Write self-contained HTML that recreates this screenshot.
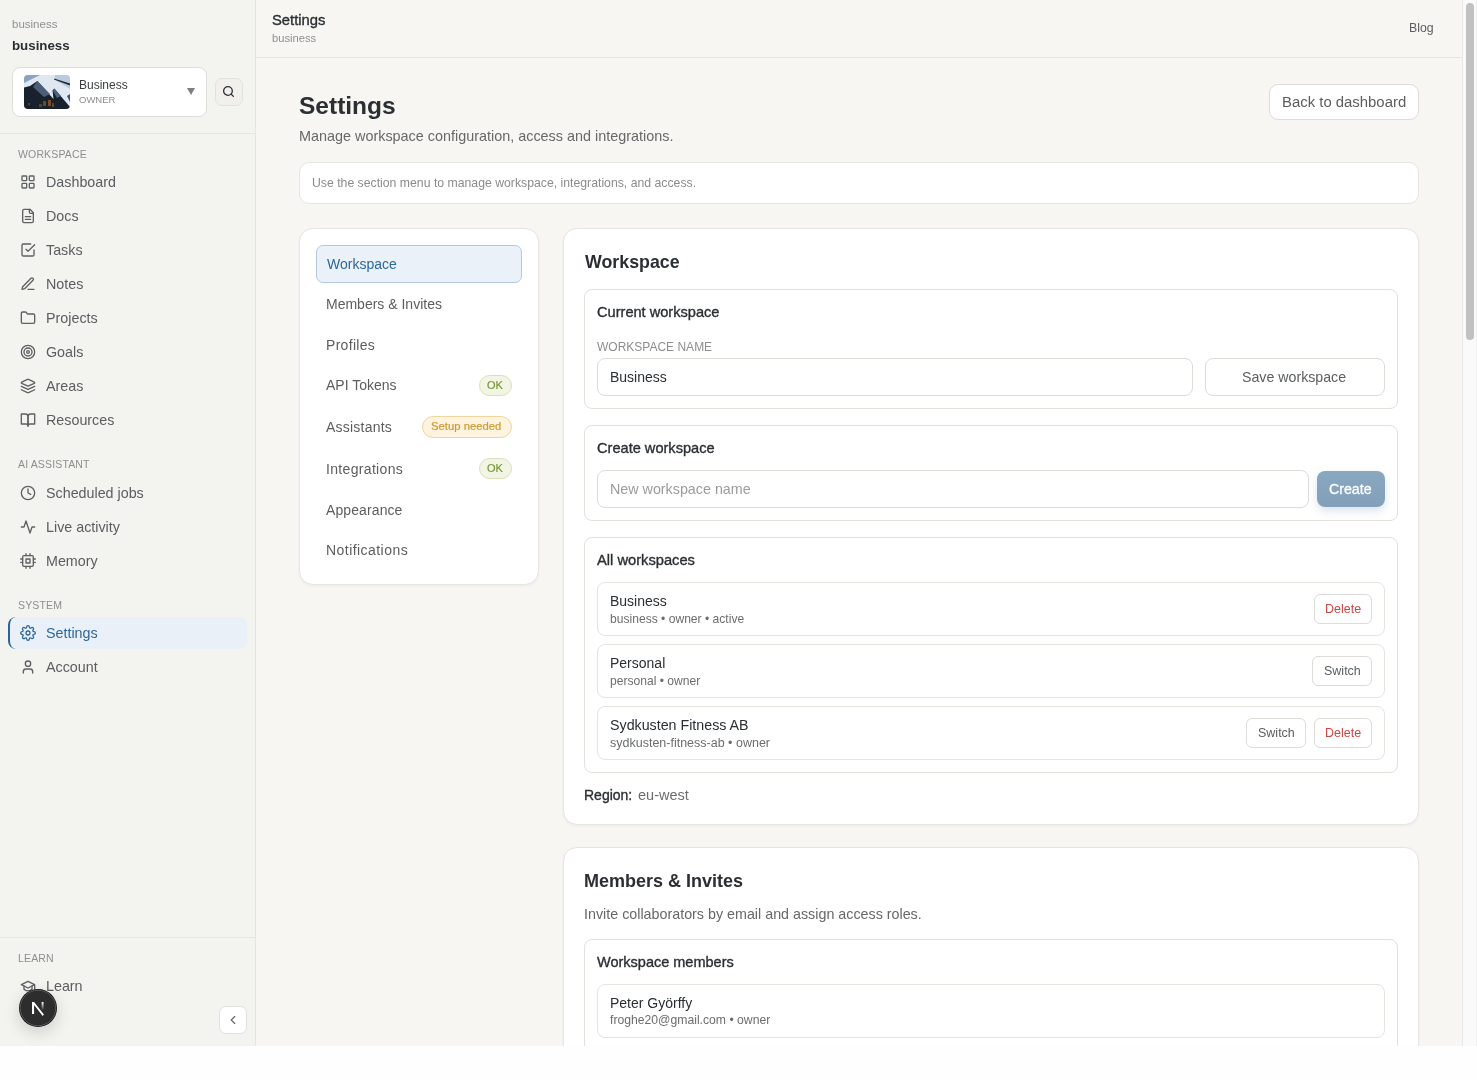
<!DOCTYPE html>
<html><head><meta charset="utf-8">
<style>
*{box-sizing:border-box;margin:0;padding:0}
html,body{width:1477px;height:1080px;overflow:hidden;background:#fefefe;font-family:"Liberation Sans",sans-serif}
#app{position:absolute;left:0;top:0;width:1477px;height:1046px;overflow:hidden;will-change:transform}
.t{position:absolute;white-space:nowrap;line-height:1}
.abs{position:absolute}
#side{position:absolute;left:0;top:0;width:256px;height:1046px;background:#f3f4ef;border-right:1px solid #e6e5e0}
#main{position:absolute;left:256px;top:0;width:1206px;height:1046px;background:#f7f6f2}
#sb{position:absolute;left:1462px;top:0;width:15px;height:1046px;background:#fafafa;border-left:1px solid #e8e8e8;border-right:1px solid #efefef}
#thumb{position:absolute;left:3px;top:3px;width:8px;height:337px;border-radius:4px;background:#c1c1c1}
.ico{position:absolute;width:16px;height:16px;fill:none;stroke:#5e6062;stroke-width:2;stroke-linecap:round;stroke-linejoin:round}
.nav{color:#5b5d5f;font-size:14.3px}
.lbl{color:#8d8e8f;font-size:10.5px;letter-spacing:0.15px}
.sb6{font-weight:normal;-webkit-text-stroke:0.35px currentColor}
.card{position:absolute;background:#fff;border:1px solid #e7e5e0;border-radius:14px}
.sub{position:absolute;background:#fff;border:1px solid #e3e1db;border-radius:8px}
.btn{position:absolute;background:#fff;border:1px solid #dedcd6;border-radius:6px}
</style></head>
<body>
<div id="app">
<!-- SIDEBAR -->
<div id="side">
  <div class="t" style="left:12px;top:19px;font-size:11.5px;color:#8f9091">business</div>
  <div class="t" style="left:12px;top:39px;font-size:13.3px;font-weight:bold;color:#2b2f33">business</div>
  <div class="abs" style="left:12px;top:67px;width:195px;height:50px;background:#fff;border:1px solid #dfddd7;border-radius:8px"></div>
  <svg class="abs" style="left:24px;top:75px" width="46" height="34" viewBox="0 0 46 34">
    <defs><clipPath id="cp"><rect width="46" height="34" rx="4"/></clipPath></defs>
    <g clip-path="url(#cp)">
      <rect width="46" height="34" fill="#dfe8f1"/>
      <polygon points="0,0 16,0 0,8" fill="#88a4c1"/>
      <polygon points="31,0 46,0 46,14 31,5" fill="#b9cbdd"/>
      <polygon points="30,3.5 46,8.5 46,10.5 30,4.6" fill="#1b2431"/>
      <polygon points="0,12.5 6,11 13.4,6 29.5,24 28.5,15.5 30.3,13.4 46,32 46,34 0,34" fill="#18212c"/>
      <polygon points="13.4,6 26,19 20,22 9,12" fill="#4d5f78"/>
      <polygon points="30.3,13.4 37,21 33,23 29,16" fill="#4a6482"/>
      <polygon points="43,21 46,19 46,27" fill="#3a5574"/>
      <rect x="19" y="26" width="3" height="5" fill="#6e4826"/><rect x="24" y="25" width="3" height="6" fill="#7a5028"/><rect x="15" y="29" width="3" height="3" fill="#5e3e22"/><rect x="28" y="28" width="2" height="4" fill="#6a4624"/>
      <rect x="4" y="28" width="2" height="2" fill="#5b4030"/>
    </g>
  </svg>
  <div class="t" style="left:79px;top:79px;font-size:12px;color:#3a3d40">Business</div>
  <div class="t" style="left:79px;top:95px;font-size:9.5px;color:#8d8e8f">OWNER</div>
  <svg class="abs" style="left:187px;top:88px" width="8" height="7" viewBox="0 0 8 7"><polygon points="0,0 8,0 4,7" fill="#7d7e7f"/></svg>
  <div class="abs" style="left:215px;top:78px;width:28px;height:28px;background:#f1f0ec;border:1px solid #e3e1dc;border-radius:7px"></div>
  <svg class="abs" style="left:222px;top:85px;width:13px;height:13px;fill:none;stroke:#2b2f33;stroke-width:2.4;stroke-linecap:round" viewBox="0 0 24 24"><circle cx="11" cy="11" r="8"/><path d="m21 21-4.3-4.3"/></svg>
  <div class="abs" style="left:0;top:133px;width:255px;height:1px;background:#e6e5e0"></div>

  <div class="t lbl" style="left:18px;top:149px">WORKSPACE</div>
  <svg class="ico" style="left:20px;top:174px" viewBox="0 0 24 24"><rect width="7" height="7" x="3" y="3" rx="1"/><rect width="7" height="7" x="14" y="3" rx="1"/><rect width="7" height="7" x="14" y="14" rx="1"/><rect width="7" height="7" x="3" y="14" rx="1"/></svg>
  <div class="t nav" style="left:46px;top:175px">Dashboard</div>
  <svg class="ico" style="left:20px;top:208px" viewBox="0 0 24 24"><path d="M15 2H6a2 2 0 0 0-2 2v16a2 2 0 0 0 2 2h12a2 2 0 0 0 2-2V7Z"/><path d="M14 2v4a2 2 0 0 0 2 2h4"/><path d="M16 13H8"/><path d="M16 17H8"/></svg>
  <div class="t nav" style="left:46px;top:209px">Docs</div>
  <svg class="ico" style="left:20px;top:242px" viewBox="0 0 24 24"><path d="m9 11 3 3L22 4"/><path d="M21 12v7a2 2 0 0 1-2 2H5a2 2 0 0 1-2-2V5a2 2 0 0 1 2-2h11"/></svg>
  <div class="t nav" style="left:46px;top:243px">Tasks</div>
  <svg class="ico" style="left:20px;top:276px" viewBox="0 0 24 24"><path d="M12 20h9"/><path d="M16.5 3.5a2.12 2.12 0 0 1 3 3L7 19l-4 1 1-4Z"/></svg>
  <div class="t nav" style="left:46px;top:277px">Notes</div>
  <svg class="ico" style="left:20px;top:310px" viewBox="0 0 24 24"><path d="M20 20a2 2 0 0 0 2-2V8a2 2 0 0 0-2-2h-7.9a2 2 0 0 1-1.69-.9L9.6 3.9A2 2 0 0 0 7.93 3H4a2 2 0 0 0-2 2v13a2 2 0 0 0 2 2Z"/></svg>
  <div class="t nav" style="left:46px;top:311px">Projects</div>
  <svg class="ico" style="left:20px;top:344px" viewBox="0 0 24 24"><circle cx="12" cy="12" r="10"/><circle cx="12" cy="12" r="6"/><circle cx="12" cy="12" r="2"/></svg>
  <div class="t nav" style="left:46px;top:345px">Goals</div>
  <svg class="ico" style="left:20px;top:378px" viewBox="0 0 24 24"><path d="m12.83 2.18a2 2 0 0 0-1.66 0L2.6 6.08a1 1 0 0 0 0 1.83l8.58 3.91a2 2 0 0 0 1.66 0l8.58-3.9a1 1 0 0 0 0-1.83Z"/><path d="m22 17.65-9.17 4.16a2 2 0 0 1-1.66 0L2 17.65"/><path d="m22 12.65-9.17 4.16a2 2 0 0 1-1.66 0L2 12.65"/></svg>
  <div class="t nav" style="left:46px;top:379px">Areas</div>
  <svg class="ico" style="left:20px;top:412px" viewBox="0 0 24 24"><path d="M2 3h6a4 4 0 0 1 4 4v14a3 3 0 0 0-3-3H2z"/><path d="M22 3h-6a4 4 0 0 0-4 4v14a3 3 0 0 1 3-3h7z"/></svg>
  <div class="t nav" style="left:46px;top:413px">Resources</div>

  <div class="t lbl" style="left:18px;top:459px">AI ASSISTANT</div>
  <svg class="ico" style="left:20px;top:485px" viewBox="0 0 24 24"><circle cx="12" cy="12" r="10"/><path d="M12 6v6l4 2"/></svg>
  <div class="t nav" style="left:46px;top:486px">Scheduled jobs</div>
  <svg class="ico" style="left:20px;top:519px" viewBox="0 0 24 24"><path d="M22 12h-4l-3 9L9 3l-3 9H2"/></svg>
  <div class="t nav" style="left:46px;top:520px">Live activity</div>
  <svg class="ico" style="left:20px;top:553px" viewBox="0 0 24 24"><rect x="4" y="4" width="16" height="16" rx="2"/><rect x="9" y="9" width="6" height="6"/><path d="M9 1v3M15 1v3M9 20v3M15 20v3M20 9h3M20 14h3M1 9h3M1 14h3"/></svg>
  <div class="t nav" style="left:46px;top:554px">Memory</div>

  <div class="t lbl" style="left:18px;top:600px">SYSTEM</div>
  <div class="abs" style="left:8px;top:617px;width:239px;height:32px;background:#e9f0f7;border-radius:8px;border-left:2px solid #2d6494"></div>
  <svg class="ico" style="left:20px;top:625px;stroke:#2f6699;stroke-width:1.9" viewBox="0 0 24 24"><circle cx="12" cy="12" r="3"/><path d="M19.4 15a1.65 1.65 0 0 0 .33 1.82l.06.06a2 2 0 0 1 0 2.830 2 2 0 0 1-2.83 0l-.06-.06a1.65 1.65 0 0 0-1.82-.33 1.65 1.65 0 0 0-1 1.51V21a2 2 0 0 1-2 2 2 2 0 0 1-2-2v-.09A1.65 1.65 0 0 0 9 19.4a1.65 1.65 0 0 0-1.82.33l-.06.06a2 2 0 0 1-2.83 0 2 2 0 0 1 0-2.83l.06-.06a1.650 1.650 0 0 0 .33-1.82 1.65 1.65 0 0 0-1.51-1H3a2 2 0 0 1-2-2 2 2 0 0 1 2-2h.09A1.65 1.65 0 0 0 4.6 9a1.65 1.65 0 0 0-.33-1.82l-.06-.06a2 2 0 0 1 0-2.83 2 2 0 0 1 2.83 0l.06.06a1.65 1.65 0 0 0 1.82.33H9a1.65 1.65 0 0 0 1-1.51V3a2 2 0 0 1 2-2 2 2 0 0 1 2 2v.09a1.65 1.65 0 0 0 1 1.51 1.65 1.65 0 0 0 1.82-.33l.06-.06a2 2 0 0 1 2.83 0 2 2 0 0 1 0 2.83l-.06.06a1.65 1.65 0 0 0-.33 1.82V9a1.65 1.65 0 0 0 1.51 1H21a2 2 0 0 1 2 2 2 2 0 0 1-2 2h-.09a1.65 1.65 0 0 0-1.51 1z"/></svg>
  <div class="t nav" style="left:46px;top:626px;color:#2f6699">Settings</div>
  <svg class="ico" style="left:20px;top:659px" viewBox="0 0 24 24"><path d="M19 21v-2a4 4 0 0 0-4-4H9a4 4 0 0 0-4 4v2"/><circle cx="12" cy="7" r="4"/></svg>
  <div class="t nav" style="left:46px;top:660px">Account</div>

  <div class="abs" style="left:0;top:937px;width:255px;height:1px;background:#e6e5e0"></div>
  <div class="t lbl" style="left:18px;top:953px">LEARN</div>
  <svg class="ico" style="left:20px;top:978px" viewBox="0 0 24 24"><path d="M22 10v6M2 10l10-5 10 5-10 5z"/><path d="M6 12v5c3 3 9 3 12 0v-5"/></svg>
  <div class="t nav" style="left:46px;top:979px">Learn</div>
  <div class="abs" style="left:19px;top:989px;width:38px;height:38px;border-radius:50%;box-shadow:0 5px 16px rgba(0,0,0,0.16)"></div>
  <svg class="abs" style="left:19px;top:989px" width="38" height="38" viewBox="0 0 38 38">
    <defs><linearGradient id="ng" x1="0" y1="0" x2="0" y2="1"><stop offset="0" stop-color="#fff"/><stop offset="1" stop-color="#fff" stop-opacity="0"/></linearGradient></defs>
    <circle cx="19" cy="19" r="19" fill="#101010"/>
    <circle cx="19" cy="19" r="17.8" fill="#2d2d2d" stroke="#5a5a5a" stroke-width="1"/>
    <path d="M13 13h2.1l9.8 12.6-1.2 1.4-8.6-11.1v9H13z" fill="#fff"/>
    <rect x="22.6" y="13" width="2" height="8" fill="url(#ng)"/>
  </svg>
  <div class="abs" style="left:219px;top:1006px;width:28px;height:28px;background:#fff;border:1px solid #e2e0da;border-radius:7px"></div>
  <svg class="abs" style="left:226px;top:1013px;width:14px;height:14px;fill:none;stroke:#666;stroke-width:2;stroke-linecap:round;stroke-linejoin:round" viewBox="0 0 24 24"><path d="m15 18-6-6 6-6"/></svg>
</div>

<!-- MAIN -->
<div id="main">
  <div class="abs" style="left:0;top:57px;width:1206px;height:1px;background:#e6e5e0"></div>
  <div class="t sb6" style="left:16px;top:13px;font-size:14.8px;color:#2b2f33">Settings</div>
  <div class="t" style="left:16px;top:33px;font-size:11.2px;color:#8f9091">business</div>
  <div class="t" style="left:1153px;top:22px;font-size:12.3px;color:#5b5d5f">Blog</div>

  <div class="t" style="left:43px;top:94px;font-size:24.5px;font-weight:bold;color:#2b2f33">Settings</div>
  <div class="t" style="left:43px;top:129px;font-size:14.4px;color:#666869">Manage workspace configuration, access and integrations.</div>
  <div class="abs" style="left:1013px;top:84px;width:150px;height:36px;background:#fff;border:1px solid #dedcd6;border-radius:9px"></div>
  <div class="t" style="left:1026px;top:95px;font-size:14.9px;color:#5b5d5f">Back to dashboard</div>

  <div class="abs" style="left:43px;top:162px;width:1120px;height:42px;background:#fff;border:1px solid #e7e5e0;border-radius:10px"></div>
  <div class="t" style="left:56px;top:177px;font-size:12.25px;color:#8a8b8c">Use the section menu to manage workspace, integrations, and access.</div>

  <!-- settings menu -->
  <div class="card" style="left:43px;top:228px;width:240px;height:357px;box-shadow:0 1px 3px rgba(0,0,0,0.05)"></div>
  <div class="abs" style="left:60px;top:245px;width:206px;height:38px;background:#eaf1f8;border:1px solid #b3cade;border-radius:7px"></div>
  <div class="t" style="left:71px;top:257px;font-size:14px;color:#2f6699">Workspace</div>
  <div class="t" style="left:70px;top:297px;font-size:14px;color:#5b5d5f">Members &amp; Invites</div>
  <div class="t" style="letter-spacing:0.3px;left:70px;top:338px;font-size:14px;color:#5b5d5f">Profiles</div>
  <div class="t" style="left:70px;top:378px;font-size:14px;color:#5b5d5f">API Tokens</div>
  <div class="abs" style="left:223px;top:375px;width:33px;height:21px;background:#f2f5e3;border:1px solid #d8e0b8;border-radius:11px"></div>
  <div class="t" style="left:231px;top:380px;font-size:11px;color:#7a983a;-webkit-text-stroke:0.2px #7a983a">OK</div>
  <div class="t" style="letter-spacing:0.22px;left:70px;top:420px;font-size:14px;color:#5b5d5f">Assistants</div>
  <div class="abs" style="left:166px;top:416px;width:90px;height:22px;background:#fdf3de;border:1px solid #f0d69c;border-radius:11px"></div>
  <div class="t" style="left:175px;top:421px;font-size:11.3px;color:#cf9a35;-webkit-text-stroke:0.2px #cf9a35">Setup needed</div>
  <div class="t" style="letter-spacing:0.33px;left:70px;top:462px;font-size:14px;color:#5b5d5f">Integrations</div>
  <div class="abs" style="left:223px;top:458px;width:33px;height:21px;background:#f2f5e3;border:1px solid #d8e0b8;border-radius:11px"></div>
  <div class="t" style="left:231px;top:463px;font-size:11px;color:#7a983a;-webkit-text-stroke:0.2px #7a983a">OK</div>
  <div class="t" style="letter-spacing:0.1px;left:70px;top:503px;font-size:14px;color:#5b5d5f">Appearance</div>
  <div class="t" style="letter-spacing:0.45px;left:70px;top:543px;font-size:14px;color:#5b5d5f">Notifications</div>

  <!-- workspace card -->
  <div class="card" style="left:307px;top:228px;width:856px;height:597px;box-shadow:0 1px 3px rgba(0,0,0,0.05)"></div>
  <div class="t" style="left:329px;top:254px;font-size:17.8px;font-weight:bold;color:#2b2f33">Workspace</div>

  <div class="sub" style="left:328px;top:289px;width:814px;height:120px"></div>
  <div class="t sb6" style="left:341px;top:305px;font-size:14.6px;color:#2b2f33">Current workspace</div>
  <div class="t" style="left:341px;top:341px;font-size:12px;color:#8d8e8f">WORKSPACE NAME</div>
  <div class="abs" style="left:341px;top:358px;width:596px;height:38px;background:#fff;border:1px solid #dedcd6;border-radius:8px"></div>
  <div class="t" style="left:354px;top:370px;font-size:14px;color:#2b2f33">Business</div>
  <div class="abs" style="left:949px;top:358px;width:180px;height:38px;background:#fff;border:1px solid #dedcd6;border-radius:8px"></div>
  <div class="t" style="left:986px;top:370px;font-size:14.2px;color:#5b5d5f">Save workspace</div>

  <div class="sub" style="left:328px;top:425px;width:814px;height:96px"></div>
  <div class="t sb6" style="left:341px;top:441px;font-size:14.6px;color:#2b2f33">Create workspace</div>
  <div class="abs" style="left:341px;top:470px;width:712px;height:38px;background:#fff;border:1px solid #dedcd6;border-radius:8px"></div>
  <div class="t" style="left:354px;top:482px;font-size:14.3px;color:#9a9b9c">New workspace name</div>
  <div class="abs" style="left:1061px;top:471px;width:68px;height:36px;background:linear-gradient(#88a7c1,#83a0b9);border-radius:8px;box-shadow:0 4px 10px rgba(60,100,150,0.18)"></div>
  <div class="t" style="left:1073px;top:482px;font-size:14.2px;color:#fff;-webkit-text-stroke:0.3px #fff">Create</div>

  <div class="sub" style="left:328px;top:537px;width:814px;height:236px"></div>
  <div class="t sb6" style="left:341px;top:553px;font-size:14.7px;color:#2b2f33">All workspaces</div>

  <div class="sub" style="left:341px;top:582px;width:788px;height:54px;border-color:#e6e4de"></div>
  <div class="t" style="left:354px;top:594px;font-size:14px;color:#2b2f33">Business</div>
  <div class="t" style="left:354px;top:613px;font-size:12.1px;color:#6b6d6f">business • owner • active</div>
  <div class="btn" style="left:1058px;top:594px;width:58px;height:30px"></div>
  <div class="t" style="left:1069px;top:603px;font-size:12.5px;color:#c8473f">Delete</div>

  <div class="sub" style="left:341px;top:644px;width:788px;height:54px;border-color:#e6e4de"></div>
  <div class="t" style="left:354px;top:656px;font-size:14px;color:#2b2f33">Personal</div>
  <div class="t" style="left:354px;top:675px;font-size:12.1px;color:#6b6d6f">personal • owner</div>
  <div class="btn" style="left:1056px;top:656px;width:60px;height:30px"></div>
  <div class="t" style="left:1068px;top:665px;font-size:12.5px;color:#5b5d5f">Switch</div>

  <div class="sub" style="left:341px;top:706px;width:788px;height:54px;border-color:#e6e4de"></div>
  <div class="t" style="left:354px;top:718px;font-size:14.25px;color:#2b2f33">Sydkusten Fitness AB</div>
  <div class="t" style="left:354px;top:737px;font-size:12.5px;color:#6b6d6f">sydkusten-fitness-ab • owner</div>
  <div class="btn" style="left:990px;top:718px;width:60px;height:30px"></div>
  <div class="t" style="left:1002px;top:727px;font-size:12.5px;color:#5b5d5f">Switch</div>
  <div class="btn" style="left:1058px;top:718px;width:58px;height:30px"></div>
  <div class="t" style="left:1069px;top:727px;font-size:12.5px;color:#c8473f">Delete</div>

  <div class="t sb6" style="left:328px;top:788px;font-size:14px;color:#2b2f33">Region:</div>
  <div class="t" style="left:382px;top:788px;font-size:14.5px;color:#6b6d6f">eu-west</div>

  <!-- members card -->
  <div class="card" style="left:307px;top:847px;width:856px;height:260px;box-shadow:0 1px 3px rgba(0,0,0,0.05)"></div>
  <div class="t" style="left:328px;top:872px;font-size:18px;font-weight:bold;color:#2b2f33">Members &amp; Invites</div>
  <div class="t" style="left:328px;top:907px;font-size:14.3px;color:#666869">Invite collaborators by email and assign access roles.</div>
  <div class="sub" style="left:328px;top:939px;width:814px;height:200px"></div>
  <div class="t sb6" style="left:341px;top:955px;font-size:14.5px;color:#2b2f33">Workspace members</div>
  <div class="sub" style="left:341px;top:984px;width:788px;height:54px;border-color:#e6e4de"></div>
  <div class="t" style="left:354px;top:996px;font-size:14px;color:#2b2f33">Peter Györffy</div>
  <div class="t" style="left:354px;top:1014px;font-size:12.2px;color:#6b6d6f">froghe20@gmail.com • owner</div>
</div>

<div id="sb"><div id="thumb"></div></div>
</div>
</body></html>
